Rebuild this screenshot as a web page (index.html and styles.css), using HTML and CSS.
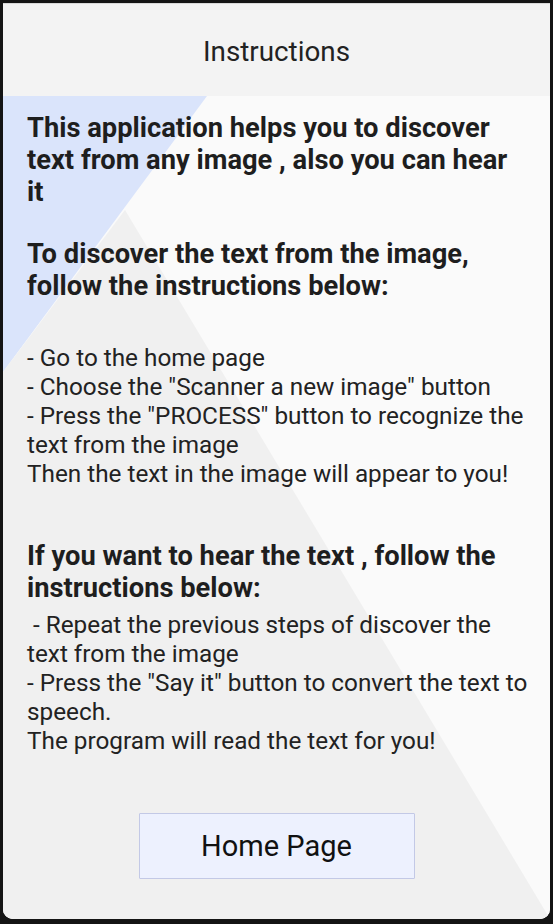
FILE: index.html
```html
<!DOCTYPE html>
<html>
<head>
<meta charset="utf-8">
<link rel="stylesheet" href="styles.css">
</head>
<body>
<div class="frame">
  <div class="header">Instructions</div>
  <div class="content">
    <svg class="bg" viewBox="0 0 547 823" preserveAspectRatio="none" aria-hidden="true">
      <polygon points="0,0 204,0 0,276" fill="#dae4fb"/>
      <polygon points="122,114 547,823 0,823 0,276" fill="#f0f0f0"/>
    </svg>
    <div class="text">
      <h2 class="heading h-first">This application helps you to discover<br>text from any image , also you can hear<br>it</h2>
      <h2 class="heading h-second">To discover the text from the image,<br>follow the instructions below:</h2>
      <p class="body b-first">- Go to the home page<br>- Choose the "Scanner a new image" button<br>- Press the "PROCESS" button to recognize the<br>text from the image<br>Then the text in the image will appear to you!</p>
      <h2 class="heading h-third">If you want to hear the text , follow the<br>instructions below:</h2>
      <p class="body b-second">&nbsp;- Repeat the previous steps of discover the<br>text from the image<br>- Press the "Say it" button to convert the text to<br>speech.<br>The program will read the text for you!</p>
      <div class="actions"><button class="home-btn">Home Page</button></div>
    </div>
  </div>
</div>
</body>
</html>
```

FILE: styles.css
```css
html, body {
  margin: 0;
  padding: 0;
  background: #141414;
  width: 553px;
  height: 924px;
  overflow: hidden;
}
.frame {
  margin: 3px 3px 0 3px;
  height: 916px;
  border-radius: 0 0 10px 10px;
  overflow: hidden;
  display: flex;
  flex-direction: column;
  font-family: Roboto, "Noto Sans", sans-serif;
  background: #fafafa;
}
.header {
  height: 93px;
  flex: none;
  background: #f3f3f3;
  border-top: 1px solid #d8d8d8;
  box-sizing: border-box;
  display: flex;
  align-items: center;
  justify-content: center;
  font-size: 27.8px;
  color: #222;
  padding-top: 2px;
}
.content {
  position: relative;
  flex: 1;
  background: #fafafa;
}
.bg {
  position: absolute;
  left: 0;
  top: 0;
  width: 100%;
  height: 100%;
  display: block;
}
.text {
  position: relative;
  padding: 16px 0 0 24px;
  white-space: nowrap;
}
.heading {
  margin: 0;
  font-size: 27.3px;
  line-height: 32px;
  font-weight: 700;
  color: #1e1e1e;
}
.h-second { margin-top: 30px; }
.h-third { margin-top: 52px; }
.body {
  margin: 0;
  font-size: 24.3px;
  line-height: 29px;
  color: #222;
}
.b-first { margin-top: 41px; }
.b-second { margin-top: 6px; }
.actions {
  margin-top: 58px;
  padding-right: 24px;
  display: flex;
  justify-content: center;
}
.home-btn {
  width: 276px;
  height: 66px;
  background: #edf1fe;
  border: 1px solid #c3c9e6;
  border-radius: 1px;
  font-family: Roboto, "Noto Sans", sans-serif;
  font-size: 29px;
  color: #111;
  padding: 0;
}
```
